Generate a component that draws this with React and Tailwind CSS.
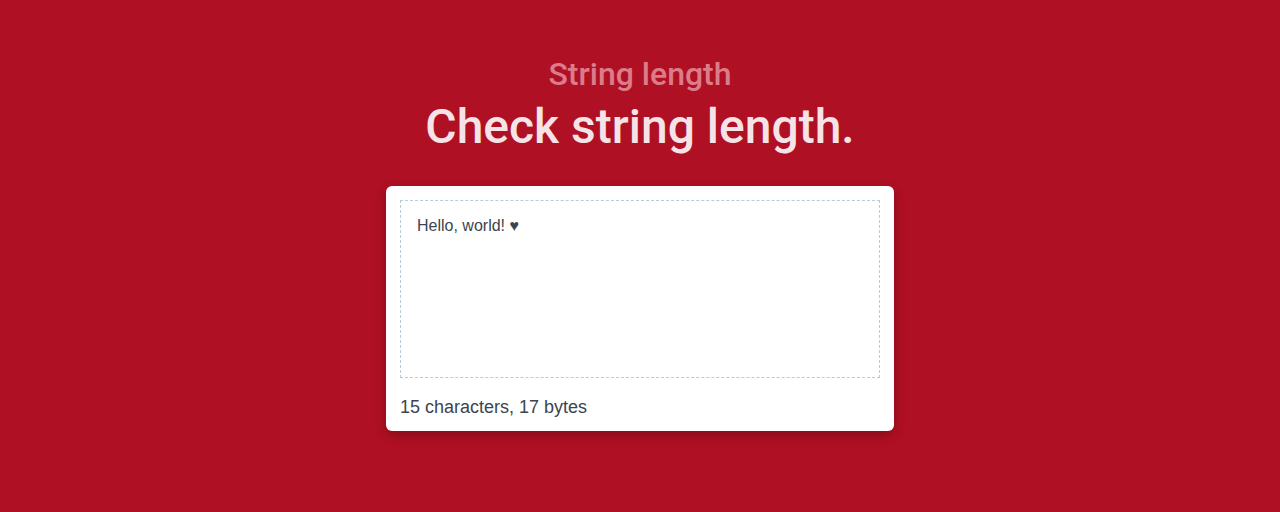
export default function App() {
  return (
    <div className="min-h-[512px] w-full bg-[#b01023] flex flex-col items-center" style={{ fontFamily: "Roboto, 'Liberation Sans', sans-serif" }}>
      <div className="mt-[54px] text-[32px] leading-[40px] font-medium text-[#dc7c8a]">String length</div>
      <h1 className="mt-[2px] text-[48px] leading-[62px] font-medium text-[#f6e3e8]">Check string length.</h1>
      <div className="mt-[28px] w-[508px] bg-white rounded-[6px] shadow-[0_4px_12px_rgba(0,0,0,0.25)] p-[14px] pb-[12px]" style={{ fontFamily: "'Liberation Sans', Arial, sans-serif" }}>
        <div className="h-[178px] border border-dashed border-[#b9cbd6] px-[16px] py-[14px] text-[16px] leading-[22px] text-[#3c4450]">
          Hello, world! ♥
        </div>
        <div className="mt-[17px] text-[18px] leading-[24px] text-[#3c4450]">15 characters, 17 bytes</div>
      </div>
    </div>
  );
}
